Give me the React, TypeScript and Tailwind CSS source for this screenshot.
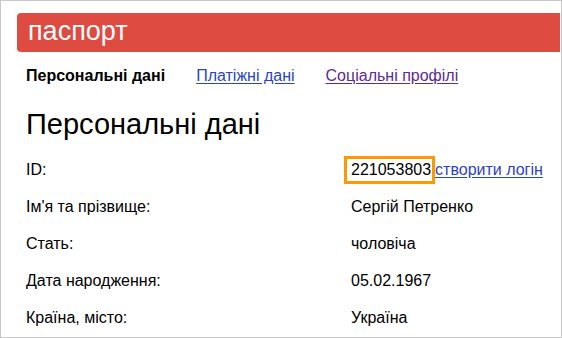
import React from 'react';

const rows: { label: string; value: React.ReactNode }[] = [
  { label: "Ім'я та прізвище:", value: 'Сергій Петренко' },
  { label: 'Стать:', value: 'чоловіча' },
  { label: 'Дата народження:', value: '05.02.1967' },
  { label: 'Країна, місто:', value: 'Україна' },
];

export default function App() {
  return (
    <div
      className="w-[562px] h-[338px] border border-[#c8c8c8] bg-white overflow-hidden text-black"
      style={{ fontFamily: '"Liberation Sans", Arial, sans-serif' }}
    >
      {/* header bar */}
      <div className="mt-[12px] ml-[16px] mr-px h-[39px] bg-[#dd4b41] rounded-l-[4px] flex items-center pl-[11px]">
        <span className="text-white text-[27px] leading-none -mt-[2px]">паспорт</span>
      </div>

      {/* tabs */}
      <div className="flex items-center gap-[31px] pl-[25px] mt-[15px] h-[18px] text-[16px]">
        <span className="font-bold">Персональні дані</span>
        <a href="#" className="text-[#2a44c4] underline underline-offset-2">Платіжні дані</a>
        <a href="#" className="text-[#5b2a96] underline underline-offset-2">Соціальні профілі</a>
      </div>

      <h1 className="pl-[25px] mt-[22px] text-[29px] leading-[34px]">Персональні дані</h1>

      <div className="pl-[25px] mt-[10px] text-[16px]">
        <div className="flex items-center h-[37px]">
          <span className="w-[318px]">ID:</span>
          <span className="border-[3px] border-[#ff9900] pl-[4px] pr-[1px] h-[28px] flex items-center">221053803</span>
          <a href="#" className="text-[#2a44c4] underline underline-offset-2">створити логін</a>
        </div>
        {rows.map((r) => (
          <div key={r.label} className="flex items-center h-[37px]">
            <span className="w-[325px]">{r.label}</span>
            <span>{r.value}</span>
          </div>
        ))}
      </div>
    </div>
  );
}
